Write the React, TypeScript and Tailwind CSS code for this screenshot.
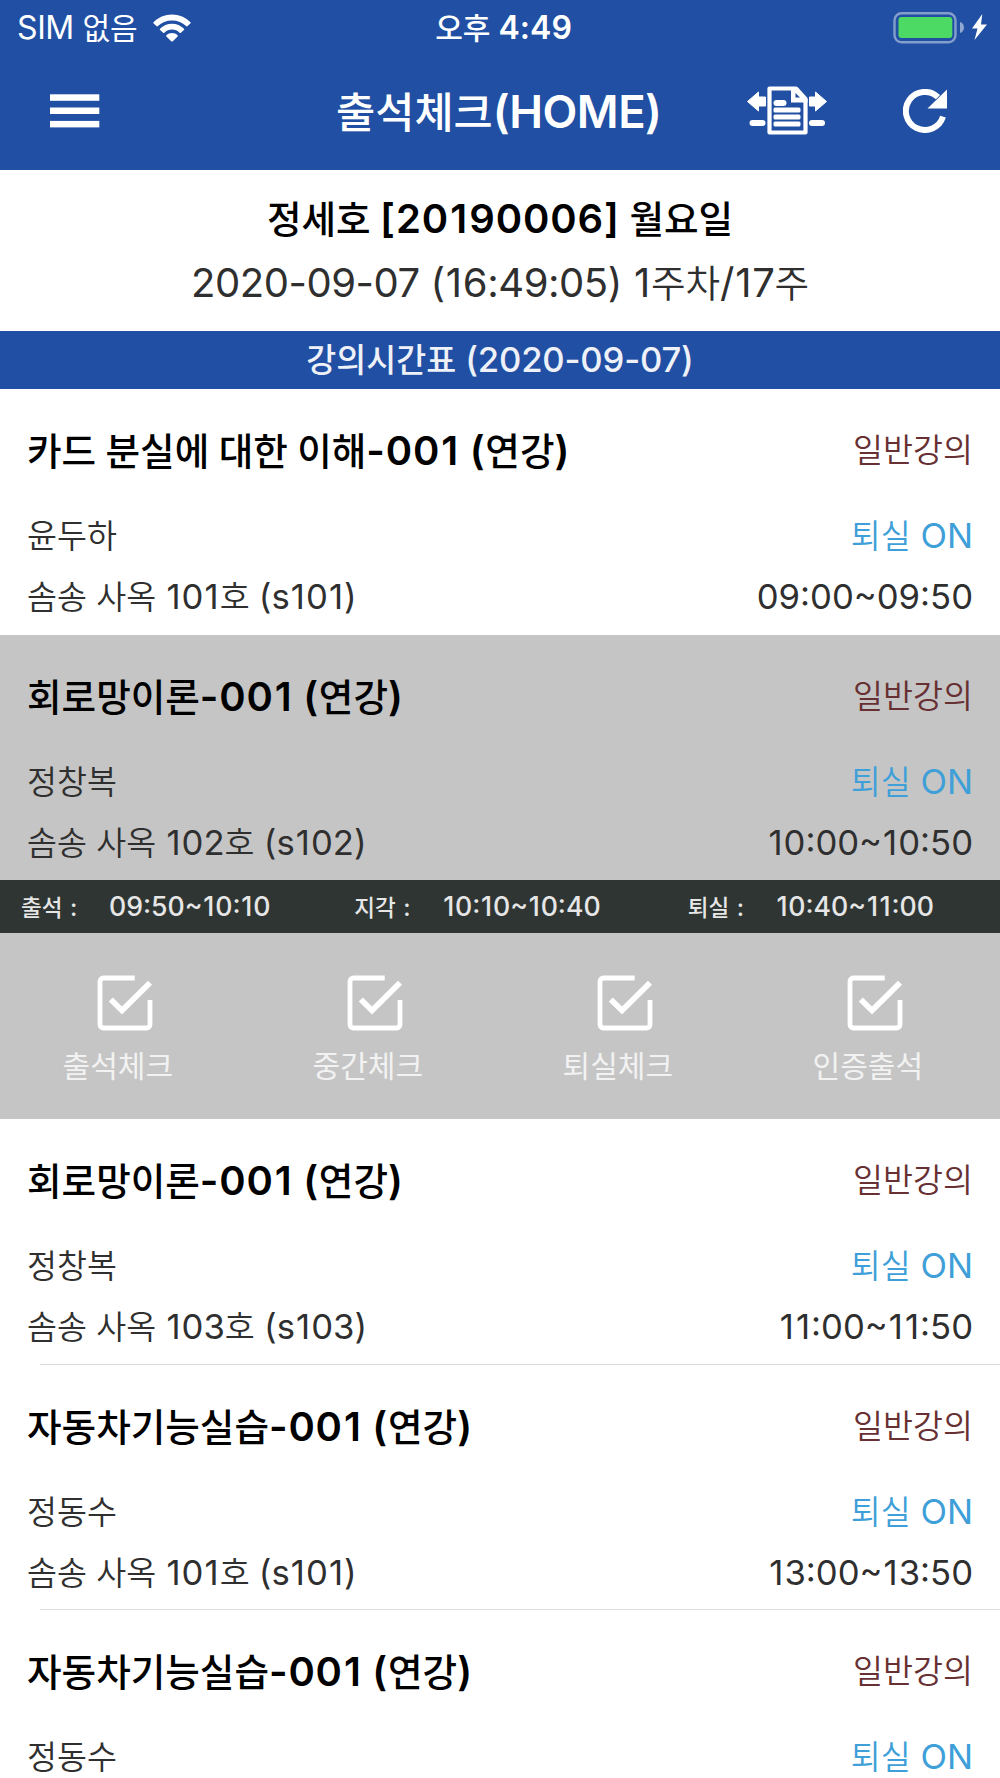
import { Fragment } from 'react'

interface Lecture {
  title: string
  professor: string
  room?: string
  time?: string
  active?: boolean
  divider?: boolean
}

const lectures: Lecture[] = [
  { title: '카드 분실에 대한 이해-001 (연강)', professor: '윤두하', room: '솜송 사옥 101호 (s101)', time: '09:00~09:50' },
  { title: '회로망이론-001 (연강)', professor: '정창복', room: '솜송 사옥 102호 (s102)', time: '10:00~10:50', active: true },
  { title: '회로망이론-001 (연강)', professor: '정창복', room: '솜송 사옥 103호 (s103)', time: '11:00~11:50', divider: true },
  { title: '자동차기능실습-001 (연강)', professor: '정동수', room: '솜송 사옥 101호 (s101)', time: '13:00~13:50', divider: true },
  { title: '자동차기능실습-001 (연강)', professor: '정동수' },
]

const periods = [
  { label: '출석 :', time: '09:50~10:10' },
  { label: '지각 :', time: '10:10~10:40' },
  { label: '퇴실 :', time: '10:40~11:00' },
]

const checks = ['출석체크', '중간체크', '퇴실체크', '인증출석']

// Hangul runs are set slightly smaller and lighter than the latin text around them,
// and the narrow "1" gets a little air on both sides
function Mixed({ text }: { text: string }) {
  return (
    <>
      {text.split(/([가-힣]+|1)/).map((part, i) => {
        if (i % 2 === 0) return <Fragment key={i}>{part}</Fragment>
        if (part === '1') return <span key={i} className="px-[0.03em]">1</span>
        return (
          <span key={i} className="text-[0.94em] tracking-normal [.font-semibold_&]:font-medium [.font-normal_&]:font-[350]">
            {part}
          </span>
        )
      })}
    </>
  )
}

function WifiIcon() {
  return (
    <svg className="w-[38px] h-[28px]" viewBox="0 0 38 28" fill="currentColor">
      <path d="M0.600 8.200C5 3.200 12 0.400 19 0.400s14 2.800 18.400 7.800c.5.500.4 1-.1 1.400l-2.700 2.500c-.5.500-1 .400-1.500 0C29.500 8.500 24.500 6.500 19 6.500S8.500 8.500 4.900 12.100c-.5.400-1 .500-1.500 0L.7 9.600c-.5-.4-.6-.9-.1-1.400z" />
      <path d="M7 14.800C10 11.500 14.500 9.700 19 9.700s9 1.800 12 5.100c.4.500.4.900-.1 1.300l-3 2.700c-.5.400-.9.300-1.300-.1-2-2-4.700-3.200-7.600-3.200s-5.600 1.200-7.600 3.200c-.4.400-.8.500-1.300.1l-3-2.700c-.5-.4-.5-.8-.1-1.300z" />
      <path d="M13.400 21.300c1.500-1.500 3.500-2.300 5.600-2.300s4.100.8 5.600 2.300c.4.400.4.800 0 1.200l-4.800 4.700c-.5.500-1.100.5-1.600 0l-4.800-4.700c-.4-.4-.4-.8 0-1.200z" />
    </svg>
  )
}

function BatteryIcon() {
  return (
    <svg className="w-[95px] h-[32px]" viewBox="0 0 95 32">
      <rect x="1.500" y="1.300" width="61" height="29" rx="7" fill="none" stroke="white" strokeOpacity="0.45" strokeWidth="2.400" />
      <rect x="5.500" y="5" width="53.800" height="21" rx="3" fill="#4cd964" />
      <path d="M67 10c2.600.6 4 3 4 5.500s-1.400 4.900-4 5.500z" fill="white" fillOpacity="0.5" />
      <path d="M89.300 2 79 16.500h5.500L81.500 28 94 12.500h-6z" fill="white" />
    </svg>
  )
}

function MenuIcon() {
  return (
    <svg className="w-[50px] h-[34px]" viewBox="0 0 50 34" fill="currentColor">
      <rect y="0.300" width="49.300" height="6.500" />
      <rect y="13.500" width="49.300" height="6.500" />
      <rect y="26.900" width="49.300" height="6.500" />
    </svg>
  )
}

function TransferIcon() {
  return (
    <svg className="w-[80px] h-[50px]" viewBox="0 0 80 50" fill="currentColor">
      <path d="M22.500 2.500H49l9.500 10.500v33.500h-36z" fill="none" stroke="currentColor" strokeWidth="4.200" strokeLinejoin="round" />
      <path d="M44 2h6.500l10 11v3.500H44z" />
      <path d="M48.500 7v4.500h4.500z" className="fill-[#204fa3]" />
      <rect x="26.500" y="14" width="13" height="6" rx="3" />
      <rect x="26.500" y="21.500" width="27" height="5" rx="1.500" />
      <rect x="26.500" y="28.500" width="27" height="5" rx="1.500" />
      <rect x="26.500" y="35.500" width="27" height="5" rx="1.500" />
      <path d="M0.500 15.500 11.500 6v5h7v9h-7v5z" strokeLinejoin="round" stroke="currentColor" />
      <path d="M79.500 15.500 68.500 6v5h-6v9h6v5z" strokeLinejoin="round" stroke="currentColor" />
      <rect x="2.500" y="34" width="16" height="6" rx="3" />
      <rect x="62" y="34" width="16" height="6" rx="3" />
    </svg>
  )
}

function RefreshIcon() {
  return (
    <svg className="w-[44px] h-[44px]" viewBox="0 0 44 44">
      <path d="M40 27.600A19 19 0 1 1 35 8.200" fill="none" stroke="white" strokeWidth="6" />
      <path d="M44 0.500v19H24.500z" fill="white" />
    </svg>
  )
}

function CheckIcon() {
  return (
    <svg className="w-[56px] h-[56px]" viewBox="0 0 56 56" fill="none" stroke="white">
      <path d="M37.700 3H6.500A3.500 3.500 0 0 0 3 6.500v43A3.500 3.500 0 0 0 6.500 53h43a3.500 3.500 0 0 0 3.500-3.500V25" strokeWidth="4.800" />
      <path d="M13.800 24.500 25 35.500 53 7.800" strokeWidth="5.800" />
    </svg>
  )
}

function LectureRow({ title, professor, room, time, active, divider }: Lecture) {
  return (
    <div className={active ? 'bg-[#c5c5c5]' : 'bg-white'}>
      <div className="h-[245.33px] px-[27px] pt-[36px]">
        <div className="flex justify-between h-[90px] leading-[52px]">
          <h2 className="text-[40px] font-semibold tracking-[0.8px] [word-spacing:-1.5px] text-black"><Mixed text={title} /></h2>
          <span className="text-[34.67px] leading-[48px] font-normal text-[#673032]"><Mixed text="일반강의" /></span>
        </div>
        <div className="flex justify-between h-[61px] leading-[40px] text-[34.67px] font-normal">
          <span><Mixed text={professor} /></span>
          <span className="text-[#3f9fd8]"><Mixed text="퇴실 ON" /></span>
        </div>
        {room && time && (
          <div className="flex justify-between leading-[40px] text-[34.67px] font-normal">
            <span className="[word-spacing:-0.5px]"><Mixed text={room} /></span>
            <span><Mixed text={time} /></span>
          </div>
        )}
      </div>
      {divider && <div className="-my-px ml-10 h-[2px] bg-[#dcdcdc]" />}
    </div>
  )
}

function AttendancePanel() {
  return (
    <div className="bg-[#c5c5c5] text-white">
      <div className="flex h-[52.67px] items-center bg-[#2f3533] text-[#e6e6e6] font-medium">
        {periods.map((p) => (
          <div key={p.label} className="flex w-1/3 items-baseline pl-[21px]">
            <span className="w-[88px] text-[24px] tracking-[1.1px]"><Mixed text={p.label} /></span>
            <span className="text-[26.67px]"><Mixed text={p.time} /></span>
          </div>
        ))}
      </div>
      <div className="grid h-[186.67px] grid-cols-4 pt-[42px]">
        {checks.map((label) => (
          <div key={label} className="flex flex-col items-start pl-[62.500px]">
            <div className="pl-[34px]"><CheckIcon /></div>
            <span className="mt-[13px] text-[32px] leading-[44px] text-[#f2f2f2]"><Mixed text={label} /></span>
          </div>
        ))}
      </div>
    </div>
  )
}

export default function App() {
  return (
    <div className="h-[1778px] w-[1000px] overflow-hidden whitespace-nowrap bg-white font-['Inter','Noto_Sans_CJK_KR',sans-serif] text-[#2f2f2f]">
      <header className="h-[170.33px] bg-[#204fa3] text-white">
        <div className="grid h-[55px] grid-cols-3 items-center">
          <div className="flex items-center gap-[15px] pl-[17px] text-[32px] tracking-[-0.4px]">
            <span><Mixed text="SIM 없음" /></span>
            <WifiIcon />
          </div>
          <div className="pl-[7px] text-center text-[32px] font-semibold"><Mixed text="오후 4:49" /></div>
          <div className="flex justify-end pr-[12px]"><BatteryIcon /></div>
        </div>
        <div className="flex h-[112px] items-center pl-[50px] pr-[53px]">
          <MenuIcon />
          <h1 className="ml-[236px] w-[411px] pt-px text-[45.33px] font-semibold tracking-[-0.5px]"><Mixed text="출석체크(HOME)" /></h1>
          <TransferIcon />
          <div className="ml-auto"><RefreshIcon /></div>
        </div>
      </header>
      <div className="h-[160.33px] pt-[17px] text-center text-[40px] leading-[64px]">
        <p className="font-semibold tracking-[0.9px] [word-spacing:-1.5px] text-black"><Mixed text="정세호 [20190006] 월요일" /></p>
        <p className="font-normal -mt-px tracking-[-0.45px]"><Mixed text="2020-09-07 (16:49:05) 1주차/17주" /></p>
      </div>
      <div className="h-[58.67px] bg-[#204fa3] text-center text-[34.67px] font-medium leading-[56px] tracking-[-0.2px] text-[#eef1f8]">
        <Mixed text="강의시간표 (2020-09-07)" />
      </div>
      <main>
        {lectures.map((lecture, i) => (
          <Fragment key={i}>
            <LectureRow {...lecture} />
            {lecture.active && <AttendancePanel />}
          </Fragment>
        ))}
      </main>
    </div>
  )
}
